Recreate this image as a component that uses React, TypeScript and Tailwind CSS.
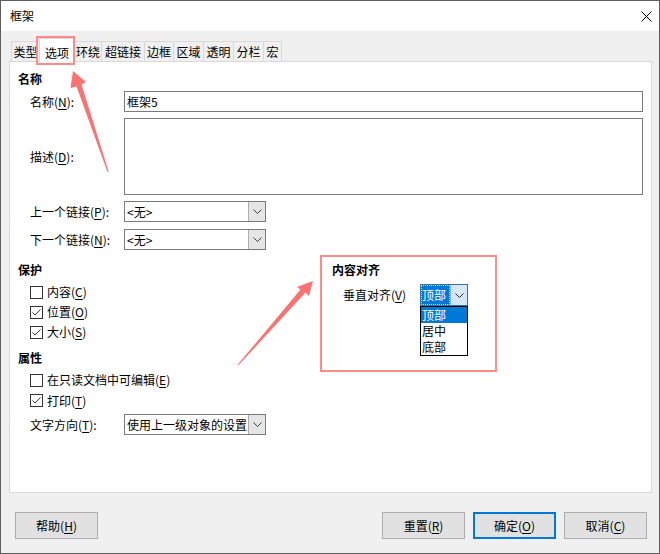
import React from "react";

function U({ c }: { c: string }) {
  return <span className="underline underline-offset-[2px]">{c}</span>;
}

function Chevron({ color = "#404040" }: { color?: string }) {
  return (
    <svg width="9" height="5" viewBox="0 0 9 5">
      <path d="M0.5 0.5 L4.5 4.5 L8.5 0.5" fill="none" stroke={color} strokeWidth="1" />
    </svg>
  );
}

function Check({ checked }: { checked: boolean }) {
  return (
    <div className="w-[13px] h-[13px] border border-[#333333] bg-white flex items-center justify-center shrink-0">
      {checked && (
        <svg width="11" height="11" viewBox="0 0 11 11">
          <path d="M1.5 5.5 L4 8 L9.5 2.5" fill="none" stroke="#333333" strokeWidth="1" />
        </svg>
      )}
    </div>
  );
}

function CheckRow({ checked, label, u, h = "h-[20px]" }: { checked: boolean; label: string; u: string; h?: string }) {
  return (
    <div className={`flex items-center pl-[12px] gap-[4px] ${h}`}>
      <Check checked={checked} />
      <span>
        {label}(<U c={u} />)
      </span>
    </div>
  );
}

function SelectBox({ text }: { text: string }) {
  return (
    <div className="flex h-[21px] w-[142px] border border-[#7a7a7a] bg-white">
      <div className="flex-1 flex items-center pl-[2px] overflow-hidden whitespace-nowrap">{text}</div>
      <div className="w-[17px] bg-[#e5e5e5] border-l border-[#adadad] flex items-center justify-center">
        <Chevron />
      </div>
    </div>
  );
}

const tabs: { t: string; w: string; sel?: boolean }[] = [
  { t: "类型", w: "w-[29px]" },
  { t: "选项", w: "w-[36px]", sel: true },
  { t: "环绕", w: "w-[28px]" },
  { t: "超链接", w: "w-[44px]" },
  { t: "边框", w: "w-[30px]" },
  { t: "区域", w: "w-[31px]" },
  { t: "透明", w: "w-[31px]" },
  { t: "分栏", w: "w-[31px]" },
  { t: "宏", w: "w-[19px]" },
];

export default function App() {
  return (
    <div className="relative w-[660px] h-[554px] border border-[#5e5e5e] bg-[#f0f0f0] flex flex-col font-['Noto_Sans_CJK_SC',sans-serif] text-[12px] text-black leading-none overflow-hidden">
      {/* title bar */}
      <div className="h-[30px] bg-white flex items-center justify-between pl-[9px] pr-[7px] shrink-0">
        <span>框架</span>
        <svg width="11" height="11" viewBox="0 0 11 11">
          <path d="M0.5 0.5 L10.5 10.5 M10.5 0.5 L0.5 10.5" stroke="#000" strokeWidth="1" />
        </svg>
      </div>

      {/* tabs */}
      <div className="flex items-end h-[23px] ml-[10px] mt-[7px] relative z-10">
        {tabs.map((tab, i) =>
          tab.sel ? (
            <div
              key={tab.t}
              className={`${tab.w} h-[24px] -mb-px -ml-px bg-white border border-b-0 border-[#d9d9d9] flex items-center justify-center pt-[4px]`}
            >
              {tab.t}
            </div>
          ) : (
            <div
              key={tab.t}
              className={`${tab.w} h-[20px] ${i > 0 ? "-ml-px" : ""} bg-[#f0f0f0] border border-b-0 border-[#d9d9d9] flex items-center justify-center`}
            >
              {tab.t}
            </div>
          )
        )}
      </div>

      {/* panel */}
      <div className="ml-[8px] w-[643px] h-[432px] bg-white border border-[#d9d9d9] pl-[8px] shrink-0">
        <div className="mt-[9px] h-[16px] flex items-center font-bold">名称</div>

        <div className="mt-[4px] h-[21px] flex items-center">
          <div className="w-[106px] pl-[12px]">
            名称(<U c="N" />):
          </div>
          <div className="w-[519px] h-[21px] border border-[#7a7a7a] flex items-center pl-[2px]">框架5</div>
        </div>

        <div className="mt-[6px] h-[77px] flex items-center">
          <div className="w-[106px] pl-[12px]">
            描述(<U c="D" />):
          </div>
          <div className="w-[519px] h-[77px] border border-[#7a7a7a]" />
        </div>

        <div className="mt-[6px] h-[21px] flex items-center">
          <div className="w-[106px] pl-[12px]">
            上一个链接(<U c="P" />):
          </div>
          <SelectBox text="<无>" />
        </div>

        <div className="mt-[7px] h-[21px] flex items-center">
          <div className="w-[106px] pl-[12px]">
            下一个链接(<U c="N" />):
          </div>
          <SelectBox text="<无>" />
        </div>

        <div className="flex">
          {/* left column */}
          <div className="w-[302px] flex flex-col">
            <div className="mt-[12px] h-[16px] flex items-center font-bold">保护</div>
            <div className="mt-[4px]">
              <CheckRow checked={false} label="内容" u="C" />
              <CheckRow checked={true} label="位置" u="O" />
              <CheckRow checked={true} label="大小" u="S" />
            </div>
            <div className="mt-[8px] h-[16px] flex items-center font-bold">属性</div>
            <div className="mt-[4px]">
              <CheckRow checked={false} label="在只读文档中可编辑" u="E" />
              <CheckRow checked={true} label="打印" u="T" h="h-[21px]" />
            </div>
            <div className="mt-[3px] h-[21px] flex items-center">
              <div className="w-[106px] pl-[12px]">
                文字方向(<U c="T" />):
              </div>
              <SelectBox text="使用上一级对象的设置" />
            </div>
          </div>

          {/* right: content alignment */}
          <div className="mt-[5px] w-[177px] h-[117px] border-2 border-[#ff8a8a] pl-[10px]">
            <div className="mt-[5px] h-[16px] flex items-center font-bold">内容对齐</div>
            <div className="mt-[6px] h-[22px] flex items-center pl-[11px]">
              <div className="w-[77px] whitespace-nowrap">
                垂直对齐(<U c="V" />)
              </div>
              <div className="relative w-[48px] h-[22px] border border-[#3d6f99] bg-white flex">
                <div className="w-[29px] h-[20px] shrink-0 bg-[#0078d7] text-white border border-dotted border-[#d8d8d8] flex items-center whitespace-nowrap overflow-hidden">
                  顶部
                </div>
                <div className="flex-1 bg-[#d5e7f7] border-l border-[#7eb4ea] flex items-center justify-center">
                  <Chevron color="#2b2b2b" />
                </div>
                <div className="absolute left-[-1px] top-[21px] w-[48px] border border-black bg-white flex flex-col z-20">
                  <div className="h-[16px] bg-[#0078d7] text-white flex items-center pl-px whitespace-nowrap">顶部</div>
                  <div className="h-[16px] flex items-center pl-px whitespace-nowrap">居中</div>
                  <div className="h-[16px] flex items-center pl-px whitespace-nowrap">底部</div>
                </div>
              </div>
            </div>
          </div>
        </div>
      </div>

      {/* buttons */}
      <div className="mt-[19px] flex items-center pl-[14px] pr-[12px]">
        <button className="w-[83px] h-[27px] bg-[#e1e1e1] border border-[#adadad] flex items-center justify-center">
          帮助(<U c="H" />)
        </button>
        <div className="flex-1" />
        <div className="flex gap-[8px]">
          <button className="w-[83px] h-[27px] bg-[#e1e1e1] border border-[#adadad] flex items-center justify-center">
            重置(<U c="R" />)
          </button>
          <button className="w-[83px] h-[27px] bg-[#e1e1e1] border-2 border-[#0078d7] flex items-center justify-center">
            确定(<U c="O" />)
          </button>
          <button className="w-[83px] h-[27px] bg-[#e1e1e1] border border-[#adadad] flex items-center justify-center">
            取消(<U c="C" />)
          </button>
        </div>
      </div>

      {/* annotations */}
      <svg
        className="absolute -left-px -top-px pointer-events-none z-30"
        width="660"
        height="554"
        viewBox="0 0 660 554"
      >
        <rect x="37" y="37" width="37" height="27" fill="none" stroke="#ff8a8a" strokeWidth="2" />
        <polygon
          points="73,71 86,82 81.5,84.5 108.6,171.6 107.6,172.2 76.5,86.5 70.5,88"
          fill="#fa7272"
        />
        <polygon
          points="313,281 309,296 305.5,292.5 238.5,365.3 237.7,364.7 300.5,289.5 297,287"
          fill="#fa7272"
        />
      </svg>
    </div>
  );
}
